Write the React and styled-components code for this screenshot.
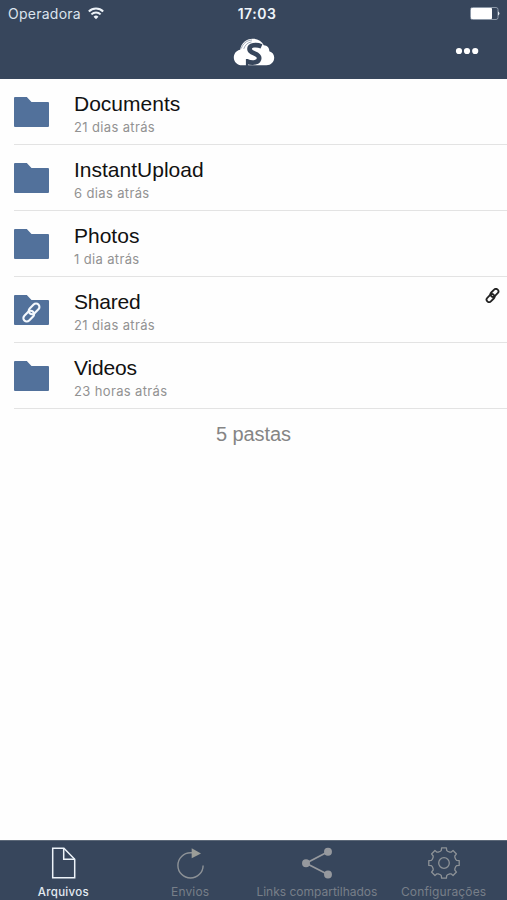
import React from "react";
import styled, { createGlobalStyle } from "styled-components";

const GlobalStyle = createGlobalStyle`
  * { box-sizing: border-box; }
  html, body { margin: 0; padding: 0; }
  body { background: #fff; }
  svg { display: block; flex: none; }
`;

const NAVY = "#37465c";
const FOLDER = "#52719b";

const Screen = styled.div`
  display: flex;
  flex-direction: column;
  width: 100%;
  height: 100vh;
  overflow: hidden;
  background: #fefefe;
  font-family: Inter, "Liberation Sans", sans-serif;
`;

const Header = styled.header`
  flex: none;
  height: 79px;
  background: ${NAVY};
`;

const StatusBar = styled.div`
  display: grid;
  grid-template-columns: 1fr auto 1fr;
  align-items: center;
  height: 27px;
  padding: 0 7px 0 8px;
`;

const Carrier = styled.div`
  display: flex;
  align-items: center;
  gap: 7px;
  font-size: 14px;
  letter-spacing: 0.25px;
  line-height: 18px;
  color: #dbe4ee;
`;

const Clock = styled.div`
  padding-left: 6px;
  font-size: 14px;
  font-weight: 600;
  letter-spacing: 0.5px;
  line-height: 18px;
  color: #eef4fa;
`;

const BatterySlot = styled.div`
  justify-self: end;
`;

const NavBar = styled.div`
  display: grid;
  grid-template-columns: 1fr auto 1fr;
  align-items: center;
  height: 50px;
  padding: 0 28px;
`;

const MoreButton = styled.button`
  grid-column: 3;
  justify-self: end;
  padding: 0 0 2px;
  border: 0;
  background: none;
`;

const LogoSlot = styled.div`
  grid-column: 2;
`;

const List = styled.ul`
  margin: 0;
  padding: 0 0 0 14px;
  list-style: none;
`;

const Row = styled.li`
  display: flex;
  align-items: flex-start;
  height: 66px;
  padding: 11px 7px 0 0;
  border-bottom: 1px solid #e3e3e3;
`;

const FolderSlot = styled.div`
  width: 60px;
  padding-top: 7px;
`;

const RowText = styled.div`
  flex: 1;
  padding-top: 1px;
`;

const Name = styled.div`
  font-family: "Liberation Sans", sans-serif;
  font-size: 21px;
  line-height: 25px;
  letter-spacing: ${(p) => p.$spacing || 0}px;
  color: #111;
`;

const Age = styled.div`
  margin-top: 3px;
  font-size: 13px;
  line-height: 17px;
  letter-spacing: 0.36px;
  color: #929292;
`;

const Summary = styled.div`
  padding-top: 13px;
  text-align: center;
  font-family: "Liberation Sans", sans-serif;
  font-size: 20px;
  line-height: 24px;
  letter-spacing: -0.1px;
  color: #858585;
`;

const TabBar = styled.nav`
  display: grid;
  grid-template-columns: repeat(4, 1fr);
  flex: none;
  height: 60px;
  margin-top: auto;
  background: ${NAVY};
  border-top: 1px solid #5c6878;
`;

const Tab = styled.div`
  display: flex;
  flex-direction: column;
  align-items: center;
  padding-top: 5px;
  color: ${(p) => (p.$active ? "#edf3f9" : "#8d9297")};
`;

const TabLabel = styled.span`
  margin-top: 4px;
  font-size: ${(p) => (p.$active ? 11.5 : 12)}px;
  line-height: 16px;
  font-weight: ${(p) => (p.$active ? 500 : 400)};
  letter-spacing: ${(p) => p.$spacing}px;
  color: ${(p) => (p.$active ? "#e3eaf1" : "#777f89")};
  white-space: nowrap;
`;

const WifiIcon = () => (
  <svg width="16" height="13" viewBox="0 0 15 12" fill="none" stroke="#edf3f8" strokeWidth="1.9">
    <path d="M.8 4.2a9.4 9.4 0 0 1 13.4 0" />
    <path d="M3.2 6.8a6.1 6.1 0 0 1 8.6 0" />
    <path d="M5.2 9l2.3 2.3L9.8 9a3.3 3.3 0 0 0-4.6 0z" fill="#edf3f8" stroke="none" />
  </svg>
);

const BatteryIcon = () => (
  <svg width="30" height="13" viewBox="0 0 30 13">
    <rect x=".5" y=".5" width="27.5" height="12" rx="2" fill="none" stroke="#8d99a8" />
    <rect x="1" y="1" width="21" height="11" rx=".8" fill="#fff" />
    <path d="M28 4.5a2.1 2.1 0 0 1 0 4z" fill="#dce3ea" />
  </svg>
);

const CloudLogo = () => (
  <svg width="42" height="30" viewBox="0 0 42 30">
    <path
      d="M9 28.3C4.3 28.3.8 25 .8 20.5c0-4 2.7-7 6.4-7.7C8 6.2 13.3 1.700 19.6 1.700c5 0 9.2 2.6 11.2 6.600 3.500.3 5.600 2.600 5.500 6 3 .9 4.900 3.200 4.900 6.300 0 4.600-3.300 7.700-7.700 7.700z"
      fill="#fff"
    />
    <path d="M8.3 11.5C9.5 7 13.5 3.3 19 3M10.800 11.800C12 8 14.800 5.500 18.500 4.900" fill="none" stroke="#8794a6" strokeWidth=".8" />
    <path
      d="M28.500 9.300C23 7 16.500 8 16.500 12c0 5 9.700 3.700 9.700 8.900 0 4.800-6.700 5.900-12.200 3.400"
      fill="none"
      stroke={NAVY}
      strokeWidth="4.700"
    />
    <path d="M12.900 22h2.300v7h-2.300z" fill={NAVY} />
  </svg>
);

const DotsIcon = () => (
  <svg width="24" height="8" viewBox="0 0 24 8" fill="#fff">
    <circle cx="4" cy="4" r="3.1" />
    <circle cx="12" cy="4" r="3.1" />
    <circle cx="20.2" cy="4" r="3.1" />
  </svg>
);

const ChainLinks = () => (
  <g transform="rotate(-45 12 12)">
    <rect x="-.5" y="8.8" width="14.5" height="8" rx="4" />
    <rect x="10" y="7.2" width="14.5" height="8" rx="4" />
  </g>
);

const FolderIcon = ({ linked }) => (
  <svg width="35" height="30" viewBox="0 0 35 30">
    <path d="M1 0h11.8l4.7 5H34a1 1 0 0 1 1 1v23a1 1 0 0 1-1 1H1a1 1 0 0 1-1-1V1a1 1 0 0 1 1-1z" fill={FOLDER} />
    {linked && (
      <g transform="translate(7.2 7.3) scale(.85)" fill="none" stroke="#f4f8fd" strokeWidth="2.5">
        <ChainLinks />
      </g>
    )}
  </svg>
);

const SmallLink = () => (
  <svg width="15" height="15" viewBox="0 0 24 24" fill="none" stroke="#222" strokeWidth="2.9">
    <ChainLinks />
  </svg>
);

const FileIcon = () => (
  <svg width="34" height="34" viewBox="0 0 34 34" fill="none" stroke="currentColor" strokeWidth="1.5">
    <path d="M6.7 2.3h11.2l10.8 10.9v18.5h-22z" />
    <path d="M17.7 2.3v11h11" />
  </svg>
);

const RefreshIcon = () => (
  <svg width="34" height="34" viewBox="0 0 34 34" fill="none" stroke="currentColor" strokeWidth="1.4">
    <path d="M19 6.800h-1.500a12.600 12.600 0 1 0 12.600 12.600" />
    <path d="M18.700 2.300v9.900l9.300-4.800z" fill="#9b9d98" stroke="none" />
  </svg>
);

const ShareIcon = () => (
  <svg width="34" height="34" viewBox="0 0 34 34" fill="#96999e" stroke="#96999e" strokeWidth="1.7">
    <path d="M28 5.800L6 17.300l22 11.200" fill="none" />
    <circle cx="28" cy="5.800" r="3.100" />
    <circle cx="6" cy="17.300" r="3.100" />
    <circle cx="28" cy="28.500" r="3.100" />
  </svg>
);

const gearPoints = Array.from({ length: 8 }, (_, i) =>
  [
    [-17, 12.3],
    [-12, 12.9],
    [-9, 15.4],
    [9, 15.4],
    [12, 12.9],
    [17, 12.3],
  ]
    .map(([offset, radius]) => {
      const angle = ((i * 45 + offset) * Math.PI) / 180;
      return `${(17 + radius * Math.sin(angle)).toFixed(2)},${(17 - radius * Math.cos(angle)).toFixed(2)}`;
    })
    .join(" ")
).join(" ");

const GearIcon = () => (
  <svg width="34" height="34" viewBox="0 0 34 34" fill="none" stroke="currentColor" strokeWidth="1.3" strokeLinejoin="round">
    <polygon points={gearPoints} />
    <circle cx="17" cy="17" r="5.3" />
  </svg>
);

const folders = [
  { name: "Documents", age: "21 dias atrás" },
  { name: "InstantUpload", age: "6 dias atrás" },
  { name: "Photos", age: "1 dia atrás" },
  { name: "Shared", age: "21 dias atrás", linked: true, spacing: -0.2 },
  { name: "Videos", age: "23 horas atrás", spacing: -0.15 },
];

const tabs = [
  { label: "Arquivos", Icon: FileIcon, active: true, spacing: 0.3 },
  { label: "Envios", Icon: RefreshIcon, spacing: 0.15 },
  { label: "Links compartilhados", Icon: ShareIcon, spacing: 0 },
  { label: "Configurações", Icon: GearIcon, spacing: 0.15 },
];

export default function App() {
  return (
    <Screen>
      <GlobalStyle />
      <Header>
        <StatusBar>
          <Carrier>
            Operadora
            <WifiIcon />
          </Carrier>
          <Clock>17:03</Clock>
          <BatterySlot>
            <BatteryIcon />
          </BatterySlot>
        </StatusBar>
        <NavBar>
          <LogoSlot>
            <CloudLogo />
          </LogoSlot>
          <MoreButton aria-label="Mais">
            <DotsIcon />
          </MoreButton>
        </NavBar>
      </Header>
      <List>
        {folders.map(({ name, age, linked, spacing }) => (
          <Row key={name}>
            <FolderSlot>
              <FolderIcon linked={linked} />
            </FolderSlot>
            <RowText>
              <Name $spacing={spacing}>{name}</Name>
              <Age>{age}</Age>
            </RowText>
            {linked && <SmallLink />}
          </Row>
        ))}
      </List>
      <Summary>5 pastas</Summary>
      <TabBar>
        {tabs.map(({ label, Icon, active, spacing }) => (
          <Tab key={label} $active={active}>
            <Icon />
            <TabLabel $active={active} $spacing={spacing}>
              {label}
            </TabLabel>
          </Tab>
        ))}
      </TabBar>
    </Screen>
  );
}
